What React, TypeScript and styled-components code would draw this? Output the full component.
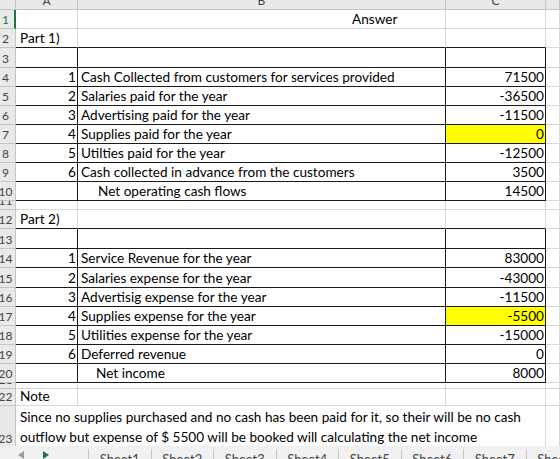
import React from 'react';
import styled, { createGlobalStyle } from 'styled-components';

const GRID = '#d9d9d9';
const INK = '#1a1a1a';
const HEAD = '#e9e9e9';
const HEAD_LINE = '#c4c4c4';
const SELECT = '#217346';
const COLS = '16px 62px 368px 100px 1fr';

const GlobalStyle = createGlobalStyle`
  * { box-sizing: border-box; }
  body {
    margin: 0;
    background: #fff;
    overflow: hidden;
  }
`;

const Workbook = styled.div`
  width: 560px;
  height: 459px;
  overflow: hidden;
  display: flex;
  flex-direction: column;
  font-family: Lato, 'Liberation Sans', sans-serif;
  font-size: 13.6px;
  color: #000;
`;

const ColumnBar = styled.div`
  flex: none;
  display: grid;
  grid-template-columns: ${COLS};
  height: 10px;
  background: ${HEAD};
  border-bottom: 1px solid ${HEAD_LINE};
`;

const ColumnLabel = styled.div`
  border-right: 1px solid ${HEAD_LINE};
  display: flex;
  justify-content: center;
  align-items: flex-end;
  overflow: hidden;
  font-size: 12px;
  line-height: 12px;
  color: #444;

  span {
    margin-bottom: 2px;
  }
`;

const Row = styled.div<{ $h: number }>`
  flex: none;
  display: grid;
  grid-template-columns: ${COLS};
  height: ${(p) => p.$h}px;
`;

const RowNumber = styled.div<{ $active?: boolean }>`
  background: ${HEAD};
  border-right: ${(p) => (p.$active ? `2px solid ${SELECT}` : `1px solid ${HEAD_LINE}`)};
  border-bottom: 1px solid ${HEAD_LINE};
  color: ${(p) => (p.$active ? SELECT : '#444')};
  font-size: 12px;
  display: flex;
  align-items: flex-end;
  justify-content: center;
  padding: 0 ${(p) => (p.$active ? 3 : 4)}px 1px 0;
  overflow: hidden;
  line-height: 14px;
`;

type Align = 'left' | 'right';

const Cell = styled.div<{
  $edge?: boolean;
  $base?: boolean;
  $align?: Align;
  $fill?: string;
  $indent?: number;
}>`
  border-right: 1px solid ${(p) => (p.$edge ? INK : GRID)};
  border-bottom: 1px solid ${(p) => (p.$base ? INK : GRID)};
  background: ${(p) => p.$fill ?? 'transparent'};
  display: flex;
  align-items: flex-end;
  justify-content: ${(p) => (p.$align === 'right' ? 'flex-end' : 'flex-start')};
  padding: 0 1px 1px ${(p) => p.$indent ?? 3}px;
  white-space: nowrap;
  line-height: 15px;
`;

const Note = styled.div`
  grid-column: span 3;
  border-right: 1px solid ${GRID};
  border-bottom: 1px solid ${GRID};
  padding: 1px 0 0 4px;
  line-height: 20px;
  white-space: nowrap;

  span {
    display: block;
  }
`;

const TabBar = styled.div`
  flex: 1;
  display: flex;
  background: #f0f0f0;
  overflow: hidden;
`;

const TabNav = styled.div`
  flex: none;
  width: 88px;
  display: flex;
  align-items: flex-end;
  gap: 19px;
  padding-left: 18px;
`;

const Tab = styled.div`
  flex: none;
  width: 62.5px;
  margin-top: 3px;
  border-left: 1px solid #c6c6c6;
  text-align: center;
  color: #444;
  font-size: 13px;
  line-height: 16px;
  padding-top: 2px;
`;

type CellSpec = {
  text?: string;
  align?: Align;
  fill?: string;
  indent?: number;
};

type RowSpec = {
  n: number;
  h: number;
  cells?: CellSpec[];
  box?: 'top' | 'in';
  note?: string[];
};

const num = (v: string, fill?: string): CellSpec => ({ text: v, align: 'right', fill });
const idx = (v: string): CellSpec => ({ text: v, align: 'right' });

const rows: RowSpec[] = [
  { n: 1, h: 19, cells: [{}, { text: 'Answer', indent: 274 }, {}] },
  { n: 2, h: 19, cells: [{ text: 'Part 1)', indent: 4 }, {}, {}], box: 'top' },
  { n: 3, h: 20, cells: [{}, {}, {}], box: 'in' },
  { n: 4, h: 19, cells: [idx('1'), { text: 'Cash Collected from customers for services provided' }, num('71500')], box: 'in' },
  { n: 5, h: 19, cells: [idx('2'), { text: 'Salaries paid for the year' }, num('-36500')], box: 'in' },
  { n: 6, h: 19, cells: [idx('3'), { text: 'Advertising paid for the year' }, num('-11500')], box: 'in' },
  { n: 7, h: 19, cells: [idx('4'), { text: 'Supplies paid for the year' }, num('0', '#ffff00')], box: 'in' },
  { n: 8, h: 19, cells: [idx('5'), { text: 'Utilties paid for the year' }, num('-12500')], box: 'in' },
  { n: 9, h: 19, cells: [idx('6'), { text: 'Cash collected in advance from the customers' }, num('3500')], box: 'in' },
  { n: 10, h: 19, cells: [{}, { text: 'Net operating cash flows', indent: 20 }, num('14500')], box: 'in' },
  { n: 11, h: 9, cells: [{}, {}, {}] },
  { n: 12, h: 19, cells: [{ text: 'Part 2)', indent: 4 }, {}, {}], box: 'top' },
  { n: 13, h: 20, cells: [{}, {}, {}], box: 'in' },
  { n: 14, h: 19, cells: [idx('1'), { text: 'Service Revenue for the year' }, num('83000')], box: 'in' },
  { n: 15, h: 20, cells: [idx('2'), { text: 'Salaries expense for the year' }, num('-43000')], box: 'in' },
  { n: 16, h: 19, cells: [idx('3'), { text: 'Advertisig expense for the year' }, num('-11500')], box: 'in' },
  { n: 17, h: 19, cells: [idx('4'), { text: 'Supplies expense for the year' }, num('-5500', '#ffff00')], box: 'in' },
  { n: 18, h: 19, cells: [idx('5'), { text: 'Utilities expense for the year' }, num('-15000')], box: 'in' },
  { n: 19, h: 19, cells: [idx('6'), { text: 'Deferred revenue' }, num('0')], box: 'in' },
  { n: 20, h: 19, cells: [{}, { text: 'Net income', indent: 18 }, num('8000')], box: 'in' },
  { n: 21, h: 6, cells: [{}, {}, {}] },
  { n: 22, h: 17, cells: [{ text: 'Note', indent: 4 }, {}, {}] },
  {
    n: 23,
    h: 40,
    note: [
      'Since no supplies purchased and no cash has been paid for it, so their will be no cash',
      'outflow but expense of $ 5500 will be booked will calculating the net income',
    ],
  },
];

const sheets = ['Sheet1', 'Sheet2', 'Sheet3', 'Sheet4', 'Sheet5', 'Sheet6', 'Sheet7', 'Sheet8'];

const Arrow: React.FC<{ dir: 'left' | 'right'; color: string }> = ({ dir, color }) => (
  <svg width="6" height="8" viewBox="0 0 6 8">
    <path d={dir === 'left' ? 'M6 0 L0 4 L6 8 Z' : 'M0 0 L6 4 L0 8 Z'} fill={color} />
  </svg>
);

const App: React.FC = () => (
  <>
    <GlobalStyle />
    <Workbook>
      <ColumnBar>
        <ColumnLabel />
        <ColumnLabel><span>A</span></ColumnLabel>
        <ColumnLabel><span>B</span></ColumnLabel>
        <ColumnLabel><span>C</span></ColumnLabel>
        <ColumnLabel />
      </ColumnBar>

      {rows.map((r) => (
        <Row key={r.n} $h={r.h}>
          <RowNumber $active={r.n === 1}>{r.n}</RowNumber>
          {r.note ? (
            <Note>
              {r.note.map((line) => (
                <span key={line}>{line}</span>
              ))}
            </Note>
          ) : (
            r.cells?.map((c, i) => (
              <Cell
                key={i}
                $edge={r.box === 'in'}
                $base={!!r.box}
                $align={c.align}
                $fill={c.fill}
                $indent={c.indent}
              >
                {c.text}
              </Cell>
            ))
          )}
          <Cell />
        </Row>
      ))}

      <TabBar>
        <TabNav>
          <Arrow dir="left" color="#9a9a9a" />
          <Arrow dir="right" color={SELECT} />
        </TabNav>
        {sheets.map((s) => (
          <Tab key={s}>{s}</Tab>
        ))}
      </TabBar>
    </Workbook>
  </>
);

export default App;
